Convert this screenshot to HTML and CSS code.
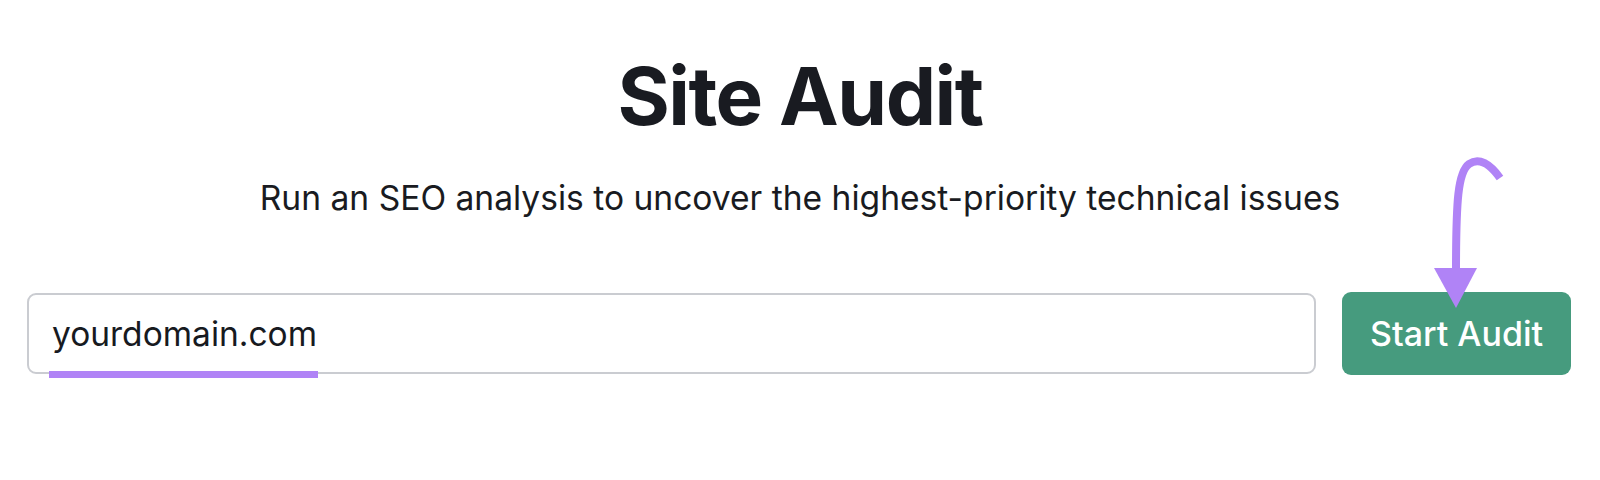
FILE: index.html
```html
<!DOCTYPE html>
<html lang="en">
<head>
  <meta charset="UTF-8" />
  <meta name="viewport" content="width=device-width, initial-scale=1.0"/>
  <title>Site Audit</title>
  <link rel="stylesheet" href="styles.css">
</head>
<body>

  <div class="page">
    <h1 class="title">Site Audit</h1>
    <p class="subtitle">Run an SEO analysis to uncover the highest-priority technical issues</p>

    <div class="form-row">
      <div class="field">
        <input type="text" class="domain" value="yourdomain.com" />
        <span class="underline"></span>
      </div>
      <button class="start">Start Audit</button>
    </div>

    <svg class="arrow" width="1600" height="480" viewBox="0 0 1600 480">
      <path d="M1500,178 C1490,164 1479,157 1469,164 C1458,172 1456,200 1456,272" fill="none" stroke="#b083f6" stroke-width="8" stroke-linecap="butt"/>
      <polygon points="1434,268 1477,268 1456,308" fill="#b083f6"/>
    </svg>
  </div>

</body>
</html>
```

FILE: styles.css
```css
body {
  margin: 0;
  background: #ffffff;
  font-family: Inter, "Noto Sans", sans-serif;
  color: #191b21;
}
.page {
  position: relative;
  height: 480px;
  overflow: hidden;
}
.title {
  margin: 48px 0 0;
  font-size: 80px;
  line-height: 96px;
  font-weight: 700;
  letter-spacing: -1.5px;
  text-align: center;
}
.subtitle {
  margin: 34px 0 0;
  font-size: 33.6px;
  line-height: 40px;
  font-weight: 400;
  text-align: center;
}
.form-row {
  display: flex;
  align-items: center;
  gap: 26px;
  margin-top: 74px;
  padding: 0 29px 0 27px;
}
.field {
  position: relative;
  flex: 1;
}
.domain {
  display: block;
  box-sizing: border-box;
  width: 100%;
  height: 81px;
  padding: 0 23px;
  border: 2px solid #caccd1;
  border-radius: 9px;
  font-family: Inter, "Noto Sans", sans-serif;
  font-size: 33.5px;
  color: #171a1f;
  outline: none;
}
.underline {
  position: absolute;
  left: 22px;
  top: 78px;
  width: 269px;
  height: 7px;
  background: #b083f6;
}
.start {
  width: 229px;
  height: 83px;
  border: none;
  border-radius: 9px;
  background: #469b7e;
  color: #ffffff;
  font-family: Inter, "Noto Sans", sans-serif;
  font-size: 34px;
  font-weight: 500;
  cursor: pointer;
}
.arrow {
  position: absolute;
  left: 0;
  top: 0;
  pointer-events: none;
}
```
